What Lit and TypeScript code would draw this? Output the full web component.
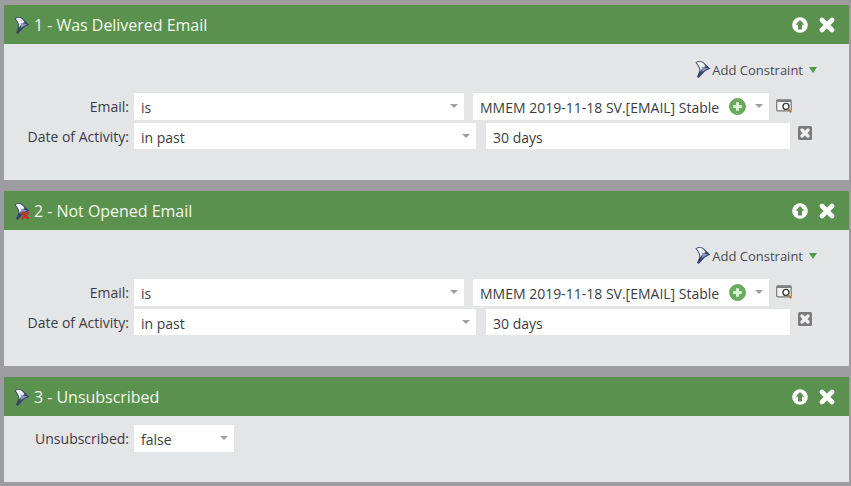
import { LitElement, html, css, svg } from "lit";
import { customElement } from "lit/decorators.js";

const funnel = (x: boolean) => html`<svg class="funnel" width="16" height="18" viewBox="0 0 16 18">
  <path d="M.4 2.6 C2.5 .4 6 .4 8.5 2.2 L15.4 8.8 C12.4 9.8 10.2 11 8.4 13 L4.2 17.4 C3.2 18 1.8 17.4 2.2 16.2 L4.4 11 C4.4 8 2.6 5 .4 2.6Z" fill="#39446a"/>
  <path d="M1.6 2.7 C3.4 1.3 6 1.4 8 3 L10.6 6 C8.4 7.2 6.6 9 5.4 11.4 C5.6 8.4 3.8 5 1.6 2.7Z" fill="#eef1f6"/>
  <path d="M6.6 6.4 L13.2 8.6 C10.6 9.4 8.6 10.8 6.4 12.8 C7.4 10.8 7.4 8.6 6.6 6.4Z" fill="#8b9ac2"/>
  ${x ? svg`<path d="M8 10 L14.5 16.8 M14.5 10 L8 16.8" stroke="#c8302c" stroke-width="2.6"/>` : ""}
</svg>`;

const upIcon = html`<svg width="16" height="16" viewBox="0 0 16 16"><circle cx="8" cy="8" r="7.8" fill="#fff"/><path d="M8 3 L12.4 7.8 H10 V12.6 H6 V7.8 H3.6Z" fill="#5a9150"/></svg>`;
const closeIcon = html`<svg width="16" height="16" viewBox="0 0 16 16"><path d="M3 3 L13 13 M13 3 L3 13" stroke="#fff" stroke-width="4.6" stroke-linecap="round"/></svg>`;
const plusIcon = html`<svg width="17" height="17" viewBox="0 0 17 17"><circle cx="8.5" cy="8.5" r="8" fill="#68ad5b" stroke="#5b9e4f" stroke-width=".8"/><path d="M8.5 4.2 V12.8 M4.2 8.5 H12.8" stroke="#dcf2d6" stroke-width="3"/></svg>`;
const lookup = html`<svg width="17" height="15" viewBox="0 0 17 15"><rect x=".7" y=".9" width="14.5" height="11" rx="1" fill="#f6f6f6" stroke="#77777b" stroke-width="1.2"/><rect x="1.2" y="1.2" width="13.6" height="1.8" fill="#77777b"/><circle cx="10" cy="7.4" r="3" fill="#fff" stroke="#3f3f42" stroke-width="1.4"/><path d="M12 9.8 L15.2 13.4" stroke="#b9803a" stroke-width="1.9"/></svg>`;
const delIcon = html`<svg class="del" width="14" height="14" viewBox="0 0 14 14"><rect width="14" height="14" rx="1.5" fill="#7a7a7c"/><path d="M4 4 L10 10 M10 4 L4 10" stroke="#eeeeee" stroke-width="3.4" stroke-linecap="round"/></svg>`;

@customElement("app-root")
export class AppRoot extends LitElement {
  static styles = css`
    :host { display: block; width: 851px; height: 486px; box-sizing: border-box; background: #9d9d9f; padding: 5px 2px 4px 4px; overflow: hidden; font-family: "Open Sans", sans-serif; }
    .stack { display: flex; flex-direction: column; gap: 11px; }
    .head { height: 39px; box-sizing: border-box; background: #5a914f; display: flex; align-items: center; padding: 0 14px 0 10px; color: #f3f8ea; font-size: 16px; }
    .funnel { flex: none; margin-right: 4px; }
    .title { flex: 1; letter-spacing: -0.03px; }
    .head-icons { display: flex; align-items: center; gap: 11px; margin-top: 1px; }
    .head-icons svg { display: block; }
    .body { background: #e4e5e7; color: #3c3c44; font-size: 14px; }
    .b-full { height: 136px; box-sizing: border-box; padding-top: 16px; }
    .b-short { height: 66px; box-sizing: border-box; padding-top: 9px; }
    .constraint { height: 20px; display: flex; align-items: center; justify-content: flex-end; padding-right: 32px; font-size: 13px; margin-bottom: 13px; color: #4a4a52; }
    .constraint .funnel { margin-right: 1px; margin-top: -2px; }
    .tri { width: 0; height: 0; border-left: 4px solid transparent; border-right: 4px solid transparent; border-top: 6px solid #4f9a45; margin-left: 6px; margin-top: -1px; }
    .row { display: flex; align-items: center; height: 27px; margin-bottom: 3px; }
    .row + .row { height: 26px; margin-top: 1px; }
    .row + .row .box { height: 26px; }
    .label { width: 125px; margin-right: 5px; text-align: right; flex: none; }
    .box { background: #fff; height: 27px; box-sizing: border-box; display: flex; align-items: center; padding: 2px 6px 0 7px; flex: none; white-space: nowrap; }
    .sel { justify-content: space-between; }
    .caret { width: 0; height: 0; border-left: 4.5px solid transparent; border-right: 4.5px solid transparent; border-top: 4.5px solid #9f9fa1; flex: none; margin-top: -3px; }
    .w330 { width: 330px; margin-right: 9px; }
    .w297 { width: 296px; margin-right: 7px; }
    .w342 { width: 342px; margin-right: 10px; }
    .w304 { width: 304px; margin-right: 8px; }
    .w100 { width: 100px; }
    .plus { display: flex; margin-left: 10px; margin-right: 9px; margin-top: -2px; }
    .del { margin-top: -6px; }
    .lookup-icon { display: flex; margin-top: 0; }
  `;

  private head(t: string, x = false) {
    return html`<div class="head">${funnel(x)}<span class="title">${t}</span><div class="head-icons">${upIcon}${closeIcon}</div></div>`;
  }

  private full(t: string, x = false) {
    return html`<section>
      ${this.head(t, x)}
      <div class="body b-full">
        <div class="constraint">${funnel(false)}<span>Add Constraint</span><span class="tri"></span></div>
        <div class="row">
          <div class="label">Email:</div>
          <div class="box sel w330"><span>is</span><span class="caret"></span></div>
          <div class="box w297"><span>MMEM 2019-11-18 SV.[EMAIL] Stable</span><span class="plus">${plusIcon}</span><span class="caret"></span></div>
          <span class="lookup-icon">${lookup}</span>
        </div>
        <div class="row">
          <div class="label">Date of Activity:</div>
          <div class="box sel w342"><span>in past</span><span class="caret"></span></div>
          <div class="box w304"><span>30 days</span></div>
          ${delIcon}
        </div>
      </div>
    </section>`;
  }

  render() {
    return html`<div class="stack">
      ${this.full("1 - Was Delivered Email")}
      ${this.full("2 - Not Opened Email", true)}
      <section>
        ${this.head("3 - Unsubscribed")}
        <div class="body b-short">
          <div class="row">
            <div class="label">Unsubscribed:</div>
            <div class="box sel w100"><span>false</span><span class="caret"></span></div>
          </div>
        </div>
      </section>
    </div>`;
  }
}
